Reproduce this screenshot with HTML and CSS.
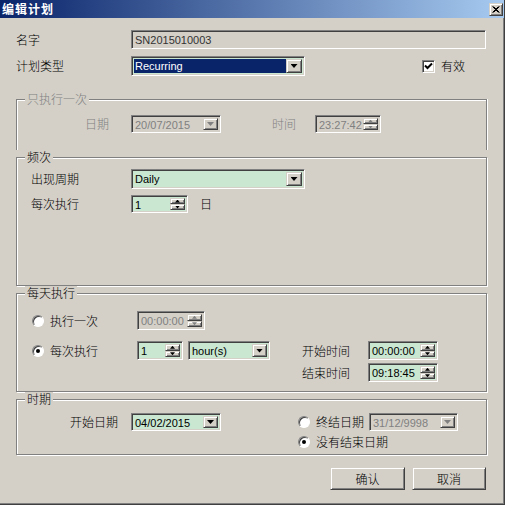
FILE: index.html
```html
<!DOCTYPE html>
<html lang="zh-CN">
<head>
  <meta charset="UTF-8" />
  <title>编辑计划</title>
  <link rel="stylesheet" href="styles.css">
</head>
<body>

  <div class="window">
    <div class="titlebar">
      <span class="title">编辑计划</span>
      <span class="close-btn raised">
        <svg width="8" height="7" viewBox="0 0 8 7"><path d="M0.5 0.5L6.5 6.5M1.5 0.5L7.5 6.5M6.5 0.5L0.5 6.5M7.5 0.5L1.5 6.5" stroke="#000" stroke-width="1"/></svg>
      </span>
    </div>

    <div class="content">
      <div class="row row-name">
        <span class="label top-label">名字</span>
        <div class="field off readonly name-field"><span class="val">SN2015010003</span></div>
      </div>

      <div class="row row-type">
        <span class="label top-label">计划类型</span>
        <div class="field combo type-combo">
          <span class="val selected">Recurring</span>
          <span class="drop raised"><i class="arrow"></i></span>
        </div>
        <div class="check">
          <span class="checkbox">
            <svg width="9" height="8" viewBox="0 0 9 8"><polyline points="1,3.5 3.5,6 8,1.5" fill="none" stroke="#000" stroke-width="2"/></svg>
          </span>
          <span class="label">有效</span>
        </div>
      </div>

      <fieldset class="group group-once">
        <legend class="dim">只执行一次</legend>
        <div class="once-row">
          <span class="label dim once-date-label">日期</span>
          <div class="field off date-field">
            <span class="val">20/07/2015</span>
            <span class="drop raised"><i class="arrow"></i></span>
          </div>
          <span class="label dim once-time-label">时间</span>
          <div class="field off time-field">
            <span class="val">23:27:42</span>
            <span class="spin"><span class="up raised"><i></i></span><span class="down raised"><i></i></span></span>
          </div>
        </div>
      </fieldset>

      <fieldset class="group group-freq">
        <legend>频次</legend>
        <div class="freq-body">
          <div class="freq-row">
            <span class="label freq-label">出现周期</span>
            <div class="field combo period-combo">
              <span class="val">Daily</span>
              <span class="drop raised"><i class="arrow"></i></span>
            </div>
          </div>
          <div class="freq-row freq-every">
            <span class="label freq-label">每次执行</span>
            <div class="field every-field">
              <span class="val">1</span>
              <span class="spin"><span class="up raised"><i></i></span><span class="down raised"><i></i></span></span>
            </div>
            <span class="label day-unit">日</span>
          </div>
        </div>
      </fieldset>

      <fieldset class="group group-daily">
        <legend>每天执行</legend>
        <div class="daily-grid">
          <div class="radio-item r1"><span class="radio"></span><span class="label">执行一次</span></div>
          <div class="field off once-time">
            <span class="val">00:00:00</span>
            <span class="spin"><span class="up raised"><i></i></span><span class="down raised"><i></i></span></span>
          </div>

          <div class="radio-item r2"><span class="radio on"></span><span class="label">每次执行</span></div>
          <div class="field count-field">
            <span class="val">1</span>
            <span class="spin"><span class="up raised"><i></i></span><span class="down raised"><i></i></span></span>
          </div>
          <div class="field combo unit-combo">
            <span class="val">hour(s)</span>
            <span class="drop raised"><i class="arrow"></i></span>
          </div>
          <span class="label time-label start-label">开始时间</span>
          <div class="field time-box start-box">
            <span class="val">00:00:00</span>
            <span class="spin"><span class="up raised"><i></i></span><span class="down raised"><i></i></span></span>
          </div>

          <span class="label time-label end-label">结束时间</span>
          <div class="field time-box end-box">
            <span class="val">09:18:45</span>
            <span class="spin"><span class="up raised"><i></i></span><span class="down raised"><i></i></span></span>
          </div>
        </div>
      </fieldset>

      <fieldset class="group group-period">
        <legend>时期</legend>
        <div class="period-grid">
          <span class="label start-date-label">开始日期</span>
          <div class="field date-field start-date">
            <span class="val">04/02/2015</span>
            <span class="drop raised"><i class="arrow"></i></span>
          </div>
          <div class="radio-item end-radio"><span class="radio"></span><span class="label">终结日期</span></div>
          <div class="field off date-field end-date">
            <span class="val">31/12/9998</span>
            <span class="drop raised"><i class="arrow"></i></span>
          </div>
          <div class="radio-item none-radio"><span class="radio on"></span><span class="label">没有结束日期</span></div>
        </div>
      </fieldset>

      <div class="actions">
        <button class="btn raised">确认</button>
        <button class="btn raised">取消</button>
      </div>
    </div>
  </div>

</body>
</html>
```

FILE: styles.css
```css
* {
  box-sizing: border-box;
}

body {
  margin: 0;
  background: #fff;
  font-family: "Liberation Sans", Arial, sans-serif;
  font-size: 11px;
  color: #000;
}

.label,
legend,
.btn {
  font-family: "Noto Sans CJK SC", "Liberation Sans", sans-serif;
  font-size: 12px;
  font-weight: 300;
  line-height: 14px;
  white-space: nowrap;
}

.dim {
  color: #808080;
}

/* window frame */
.window {
  width: 505px;
  height: 505px;
  background: #d4d0c8;
  border-right: 1px solid #404040;
  border-bottom: 1px solid #404040;
  box-shadow: inset -1px -1px #808080;
}

.titlebar {
  height: 18px;
  background: linear-gradient(to right, #0a246a, #a6caf0);
  display: flex;
  align-items: center;
  justify-content: space-between;
  padding: 0 1px 0 2px;
}

.title {
  color: #fff;
  font-family: "Noto Sans CJK SC", sans-serif;
  font-weight: bold;
  font-size: 12px;
  letter-spacing: 1px;
  line-height: 18px;
}

.close-btn {
  width: 14px;
  height: 13px;
  display: flex;
  align-items: center;
  justify-content: center;
}

/* 3d bevels */
.raised {
  background: #d4d0c8;
  border: 1px solid;
  border-color: #d4d0c8 #404040 #404040 #d4d0c8;
  box-shadow: inset 1px 1px #fff, inset -1px -1px #808080;
}

.field {
  display: flex;
  align-items: stretch;
  height: 18px;
  padding: 2px;
  background: #c9e7d1;
  border: 1px solid;
  border-color: #808080 #fff #fff #808080;
  box-shadow: inset 1px 1px #404040, inset -1px -1px #d4d0c8;
}

.field.off {
  background: #d4d0c8;
  color: #808080;
}

.field.readonly {
  color: #333;
}

.val {
  flex: 1;
  padding-left: 1px;
  line-height: 14px;
  white-space: nowrap;
  overflow: hidden;
}

.val.selected {
  background: #0a246a;
  color: #fff;
}

.drop {
  width: 15px;
  flex: none;
  display: flex;
  align-items: center;
  justify-content: center;
}

.arrow {
  display: block;
  width: 7px;
  height: 4px;
  background: #000;
  clip-path: polygon(0 0, 100% 0, 50% 100%);
}

.off .arrow,
.off .spin i {
  background: #808080;
}

.spin {
  width: 15px;
  flex: none;
  display: flex;
  flex-direction: column;
}

.spin .up,
.spin .down {
  flex: 1;
  display: flex;
  align-items: center;
  justify-content: center;
}

.spin i {
  display: block;
  width: 5px;
  height: 3px;
  background: #000;
}

.spin .up i {
  clip-path: polygon(50% 0, 100% 100%, 0 100%);
}

.spin .down i {
  clip-path: polygon(0 0, 100% 0, 50% 100%);
}

/* top rows */
.content {
  padding: 12px 17px 0 16px;
}

.row {
  display: flex;
  align-items: center;
}

.row-name {
  height: 19px;
}

.row-type {
  height: 20px;
  margin-top: 7px;
}

.top-label {
  width: 115px;
}

.name-field {
  width: 355px;
  height: 19px;
}

.type-combo {
  width: 174px;
  height: 20px;
}

.type-combo .drop {
  width: 16px;
}

.check {
  margin-left: auto;
  margin-right: 22px;
  display: flex;
  align-items: center;
  gap: 6px;
}

.checkbox {
  width: 13px;
  height: 13px;
  background: #fff;
  border: 1px solid;
  border-color: #808080 #fff #fff #808080;
  box-shadow: inset 1px 1px #404040, inset -1px -1px #d4d0c8;
  display: flex;
  align-items: center;
  justify-content: center;
}

/* group boxes */
.group {
  margin: 0;
  padding: 0;
  min-width: 0;
  border: 1px solid #808080;
  box-shadow: inset 1px 1px #fff, 1px 1px #fff;
}

.group legend {
  margin-left: 8px;
  padding: 0 2px;
  background: #d4d0c8;
}

.group-once {
  margin-top: 16px;
  border-bottom: none;
  box-shadow: inset 1px 1px #fff, 1px 0 #fff;
  padding-top: 9px;
  padding-bottom: 17px;
}

.once-row {
  display: flex;
  align-items: center;
  height: 18px;
}

.once-date-label {
  margin-left: 68px;
  width: 46px;
}

.date-field {
  width: 90px;
}

.once-time-label {
  margin-left: 51px;
  width: 43px;
}

.time-field {
  width: 66px;
}

.group-freq {
  padding-top: 5px;
  padding-bottom: 72px;
}

.freq-body {
  padding-left: 14px;
}

.freq-row {
  display: flex;
  align-items: center;
  height: 20px;
}

.freq-every {
  height: 18px;
  margin-top: 6px;
}

.freq-label {
  width: 100px;
}

.period-combo {
  width: 174px;
  height: 20px;
}

.period-combo .drop {
  width: 16px;
}

.every-field {
  width: 57px;
}

.day-unit {
  margin-left: 12px;
}

.group-daily {
  padding-top: 11px;
  padding-bottom: 9px;
}

.daily-grid {
  display: grid;
  grid-template-columns: 106px 46px 5px 82px 32px 66px 70px;
  grid-template-rows: 30px 22px 19px;
  align-items: start;
  padding-left: 14px;
}

.daily-grid .field {
  height: 19px;
}

.radio-item {
  display: flex;
  align-items: center;
  gap: 6px;
  height: 19px;
  padding-left: 1px;
}

.radio {
  width: 12px;
  height: 12px;
  flex: none;
  border-radius: 50%;
  background: #fff;
  border: 1px solid;
  border-color: #808080 #fff #fff #808080;
  box-shadow: inset 1px 1px #404040;
  display: flex;
  align-items: center;
  justify-content: center;
}

.radio.on::after {
  content: "";
  width: 4px;
  height: 4px;
  border-radius: 50%;
  background: #000;
}

.r1 {
  grid-column: 1;
  grid-row: 1;
}

.once-time {
  grid-column: 2 / 5;
  grid-row: 1;
  width: 68px;
}

.r2 {
  grid-column: 1;
  grid-row: 2;
}

.count-field {
  grid-column: 2;
  grid-row: 2;
}

.unit-combo {
  grid-column: 4;
  grid-row: 2;
}

.time-label {
  grid-column: 6;
  height: 19px;
  display: flex;
  align-items: center;
}

.start-label {
  grid-row: 2;
}

.end-label {
  grid-row: 3;
}

.time-box {
  grid-column: 7;
  width: 70px;
}

.start-box {
  grid-row: 2;
}

.end-box {
  grid-row: 3;
}

.group-period {
  padding-top: 7px;
  padding-bottom: 4px;
}

.period-grid {
  display: grid;
  grid-template-columns: 100px 90px 77px 71px 89px;
  grid-template-rows: 21px 16px;
  align-items: start;
  padding-left: 14px;
}

.start-date-label {
  grid-column: 1;
  grid-row: 1;
  text-align: right;
  padding-right: 13px;
  line-height: 18px;
}

.start-date {
  grid-column: 2;
  grid-row: 1;
}

.end-radio {
  grid-column: 4;
  grid-row: 1;
  height: 18px;
  padding-left: 0;
}

.end-date {
  grid-column: 5;
  grid-row: 1;
  width: 89px;
}

.none-radio {
  grid-column: 4 / 6;
  grid-row: 2;
  height: 16px;
  padding-left: 0;
}

.actions {
  display: flex;
  justify-content: flex-end;
  gap: 7px;
  margin-top: 12px;
  margin-right: 1px;
}

.btn {
  width: 75px;
  height: 23px;
  padding: 0;
  color: #000;
}

.btn + .btn {
  width: 74px;
}
```
